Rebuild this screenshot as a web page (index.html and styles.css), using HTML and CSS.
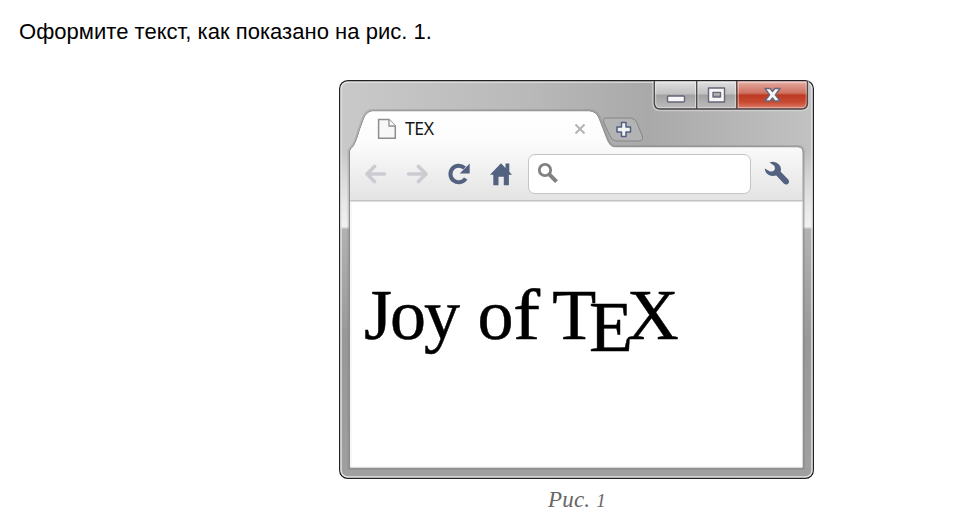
FILE: index.html
```
<!DOCTYPE html>
<html lang="ru">
<head>
<meta charset="utf-8">
<title>TEX</title>
<link rel="stylesheet" href="styles.css">
</head>
<body>
<p class="task"><span>Оформите текст, как показано на рис. 1.</span></p>
<figure class="figure">
  <div class="window">
    <svg class="frame" width="475" height="399" viewBox="0 0 475 399">
      <defs>
        <linearGradient id="top" x1="0" y1="0" x2="475" y2="0" gradientUnits="userSpaceOnUse">
          <stop offset="0" stop-color="#c9c9c9"/><stop offset=".4" stop-color="#b9b9b9"/><stop offset=".65" stop-color="#a9a9a9"/><stop offset="1" stop-color="#c2c2c2"/>
        </linearGradient>
        <linearGradient id="side" x1="0" y1="0" x2="0" y2="399" gradientUnits="userSpaceOnUse">
          <stop offset="0" stop-color="#fff" stop-opacity="0"/><stop offset=".18" stop-color="#fff" stop-opacity="0"/><stop offset=".368" stop-color="#f1f1f1"/><stop offset=".374" stop-color="#b2b2b2"/><stop offset=".65" stop-color="#989898"/><stop offset="1" stop-color="#a0a0a0"/>
        </linearGradient>
        <linearGradient id="bar" x1="0" y1="30" x2="0" y2="121" gradientUnits="userSpaceOnUse">
          <stop offset="0" stop-color="#fff"/><stop offset=".35" stop-color="#fcfcfc"/><stop offset="1" stop-color="#e3e3e3"/>
        </linearGradient>
        <linearGradient id="btn" x1="0" y1="0" x2="0" y2="1">
          <stop offset="0" stop-color="#dedede"/><stop offset=".45" stop-color="#c1c1c1"/><stop offset=".5" stop-color="#a2a2a2"/><stop offset="1" stop-color="#bdbdbd"/>
        </linearGradient>
        <linearGradient id="red" x1="0" y1="0" x2="0" y2="1">
          <stop offset="0" stop-color="#e3aaa0"/><stop offset=".42" stop-color="#cf7161"/><stop offset=".5" stop-color="#bd3922"/><stop offset=".75" stop-color="#c84a32"/><stop offset="1" stop-color="#df8370"/>
        </linearGradient>
      </defs>
      <rect x=".7" y=".7" width="473.6" height="397.6" rx="8" fill="url(#top)" stroke="#242126" stroke-width="1.4"/>
      <rect x="1.5" y="1.5" width="472" height="396" rx="7" fill="url(#side)"/>
      <rect x="2.1" y="2.1" width="470.8" height="394.8" rx="6.5" fill="none" stroke="#e4e4e4" stroke-width="1.3"/>
      <path d="M10.5 388V71q1-2 4-5 3-5 6-16l4-11q3-8 9-8H250q7 0 10 7l8 21q3 8 8 8H459q5 0 5 6V388Z" fill="#fff" stroke="#777" stroke-opacity=".28" stroke-width="4"/>
      <path d="M10.5 388V71q1-2 4-5 3-5 6-16l4-11q3-8 9-8H250q7 0 10 7l8 21q3 8 8 8H459q5 0 5 6V388Z" fill="#fff" stroke="#8c8c8c"/>
      <path d="M11 121V71q1-2 4-5 3-5 6-16l4-11q3-7 8-7.500H250q6 0 9 7l8 21q3 8 8 8H459q4 0 4 6V121Z" fill="url(#bar)"/>
      <path d="M11 120.700H464" stroke="#bfc2c5" stroke-width="1.400"/>
      <path d="M12 122V387H463V122" fill="none" stroke="#eef0f3"/>
      <path d="M266 38H290q6 0 8 5l5 12q2 6-3 6H277q-4 0-6-5l-6-13q-1-5 1-5Z" fill="#b3b3b3" stroke="#858585"/>
      <path d="M282.500 42.500h4.500v4.500h4.500v5h-4.500v4.500h-4.500v-4.500h-4.500v-5h4.500Z" fill="#f3f3f3" stroke="#4f5f83" stroke-width="1.500" stroke-linejoin="round"/>
      <path d="M314.500 1V23q0 7 6 7H462q7 0 7-7V1" fill="none" stroke="#ddd" stroke-opacity=".6" stroke-width="2.600"/>
      <path d="M315.500 1.500H398V29H321q-5.500 0-5.500-6Z" fill="url(#btn)"/>
      <path d="M398 1.500H468.500V23q0 6-6 6H398Z" fill="url(#red)"/>
      <path d="M316.700 2.700H356.500V27.700H321q-4.300 0-4.300-5ZM359 2.700H396.300V27.700H359ZM399.300 2.700H467.200V23q0 4.700-5 4.700H399.300Z" fill="none" stroke="#fff" stroke-opacity=".45"/>
      <path d="M315.300 1V23q0 6 6 6H462.500q6 0 6-6V1M357.700 1V29M397.700 1V29" fill="none" stroke="#4c4648" stroke-width="1.300"/>
      <g fill="#f7f7f7" stroke="#68667a" stroke-width="1.400">
        <rect x="328.500" y="16" width="17" height="6" rx="1"/>
        <path fill-rule="evenodd" d="M369.500 8h16v14h-16ZM374 12.500v4.500h7.500v-4.500Z" stroke-linejoin="round"/>
        <path d="M426 8.500h5.200l2.300 3 2.300-3h5.200l-4.700 6.300 4.700 6.200h-5.200l-2.300-3-2.300 3h-5.200l4.700-6.200Z" stroke-linejoin="round"/>
      </g>
    </svg>
    <div class="tabs">
      <svg width="21" height="22" viewBox="0 0 21 22" fill="none"><path d="M1.600 1.600H12L18.300 8V20.300H1.600Z" fill="#f7f7f7" stroke="#8e8e8e" stroke-width="1.500"/><path d="M12 1.600V8h6.300" fill="#fff" stroke="#8e8e8e" stroke-width="1.300"/></svg>
      <span class="tab-title">TEX</span>
      <svg class="close" width="12" height="12" viewBox="0 0 12 12"><path d="M1.500 1.500l9 9m0-9l-9 9" stroke="#b3b3b3" stroke-width="2"/></svg>
    </div>
    <div class="toolbar">
      <svg class="back" width="23" height="20" viewBox="0 0 23 20" fill="none" stroke="#cbccd2" stroke-width="3.600" stroke-linecap="round" stroke-linejoin="round"><path d="M20.500 10H3M10.500 2.500L3 10l7.500 7.500"/></svg>
      <svg class="forward" width="23" height="20" viewBox="0 0 23 20" fill="none" stroke="#cbccd2" stroke-width="3.600" stroke-linecap="round" stroke-linejoin="round"><path d="M2.500 10h17.500M12.500 2.500L20 10l-7.500 7.500"/></svg>
      <svg class="reload" width="24" height="24" viewBox="0 0 24 24"><path d="M18.700 16.500A8.300 8.300 0 1 1 17.500 6" fill="none" stroke="#526280" stroke-width="4"/><path d="M22.700 1.500V11.500H12.700Z" fill="#526280"/></svg>
      <svg class="home" width="24" height="24" viewBox="0 0 24 24" fill="#526280"><path d="M12 1.300l4.500 4.600V1.500h3.800v8.300l2.700 3h-3.100v10.500h-5.100v-8.500H9.500v8.500H4.300V12.800H1Z"/></svg>
      <div class="address">
        <svg width="22" height="23" viewBox="0 0 22 23" fill="none" stroke="#808080"><circle cx="8" cy="8" r="5.700" stroke-width="2.800"/><path d="M12.500 12.700l7 7" stroke-width="4"/></svg>
      </div>
      <svg class="wrench" width="26" height="25" viewBox="0 0 26 25"><path d="M5.500 1.500Q11-.5 15 3.500q3 3.500 1.500 7l7.800 8q1.700 2.800-.5 4.500-2 1.300-4-.5l-7.500-8Q5 16 2 11.500.7 9 .8 7.500L6 10.500q3 .5 4.500-1.500 1-2.500-.5-4.500Z" fill="#526280"/></svg>
    </div>
    <div class="page"><span class="joy">Joy</span> o<span class="letter-f">f</span> <span class="letter-t">T</span><span class="letter-e">E</span>X</div>
  </div>
  <figcaption>Рис. <span class="num">1</span></figcaption>
</figure>
</body>
</html>
```
FILE: styles.css
```
body { margin: 0; background: #fff; color: #000; overflow: hidden; }
.task { margin: 0; padding: 18px 0 0 19px; font: 22px/28px "Liberation Sans", sans-serif; letter-spacing: .03px; }
.figure { width: 475px; margin: 34px 0 0 339px; }
.window { position: relative; width: 475px; height: 399px; display: grid; grid-template-rows: 67px 54px 1fr; }
.frame { position: absolute; inset: 0; }
.tabs, .toolbar, .page { position: relative; }
.tabs { display: flex; align-items: center; height: 37px; padding: 30px 0 0 38px; }
.tab-title { width: 137px; margin: -2px 0 0 7px; font: 18px/24px "Noto Sans", sans-serif; letter-spacing: -.5px; transform: scaleX(.98); transform-origin: left; color: #171717; }
.close { margin-left: 32px; }
.toolbar { display: flex; align-items: center; height: 53px; padding-left: 25px; }
.forward { margin-left: 19px; }
.reload { margin-left: 18px; }
.home { margin-left: 18px; }
.address { width: 223px; height: 40px; margin-left: 15px; box-sizing: border-box; display: flex; align-items: center; padding-left: 8px; background: #fff; border: 1px solid #c3c5cb; border-radius: 7px; }
.wrench { margin-left: 13px; }
.page { padding: 74px 0 0 25px; font: 72px/80px "Liberation Serif", serif; letter-spacing: -1.1px; white-space: nowrap; -webkit-text-stroke: .5px #000; }
.joy { letter-spacing: -2px; margin-right: 2.700px; }
.letter-f { display: inline-block; width: 23px; transform: scaleX(1.13); transform-origin: left; margin-right: 1px; }
.letter-t { margin-right: -6px; }
.letter-e { position: relative; top: 12px; margin-right: -5.200px; }
figcaption { padding-left: 209px; font: italic 23px/26px "Liberation Serif", serif; letter-spacing: .2px; color: #666; margin-top: 8px; }
.num { font-size: 19px; }
```
